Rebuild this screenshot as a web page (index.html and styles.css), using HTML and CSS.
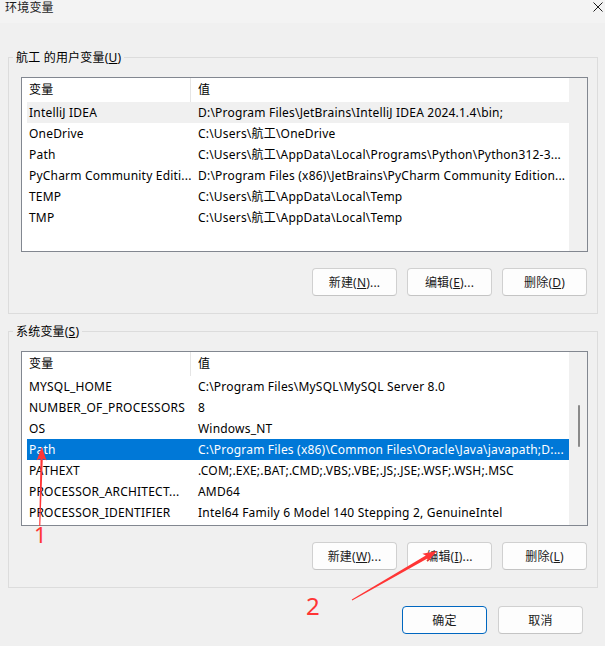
FILE: index.html
```html
<!DOCTYPE html>
<html lang="zh-CN">
<head>
<meta charset="utf-8">
<title>环境变量</title>
<link rel="stylesheet" href="styles.css">
</head>
<body>
<div class="window">
  <div class="titlebar">
    <span class="title">环境变量</span>
    <svg class="close" width="10" height="10" viewBox="0 0 10 10" aria-hidden="true">
      <path d="M0.5 0.5 L9.5 9.5 M9.5 0.5 L0.5 9.5" stroke="#1b1b1b" stroke-width="1" fill="none"/>
    </svg>
  </div>

  <fieldset class="group group-user">
    <legend>航工 的用户变量(<u>U</u>)</legend>
    <div class="list">
      <div class="list-main">
        <div class="list-head"><div class="col-name">变量</div><div class="col-value">值</div></div>
        <div class="row hover"><div class="col-name">IntelliJ IDEA</div><div class="col-value">D:\Program Files\JetBrains\IntelliJ IDEA 2024.1.4\bin;</div></div>
        <div class="row"><div class="col-name">OneDrive</div><div class="col-value">C:\Users\航工\OneDrive</div></div>
        <div class="row"><div class="col-name">Path</div><div class="col-value">C:\Users\航工\AppData\Local\Programs\Python\Python312-3...</div></div>
        <div class="row"><div class="col-name">PyCharm Community Editi...</div><div class="col-value">D:\Program Files (x86)\JetBrains\PyCharm Community Edition...</div></div>
        <div class="row"><div class="col-name">TEMP</div><div class="col-value">C:\Users\航工\AppData\Local\Temp</div></div>
        <div class="row"><div class="col-name">TMP</div><div class="col-value">C:\Users\航工\AppData\Local\Temp</div></div>
      </div>
      <div class="vscroll"></div>
    </div>
    <div class="buttons">
      <button class="btn">新建(<u>N</u>)...</button>
      <button class="btn">编辑(<u>E</u>)...</button>
      <button class="btn">删除(<u>D</u>)</button>
    </div>
  </fieldset>

  <fieldset class="group group-system">
    <legend>系统变量(<u>S</u>)</legend>
    <div class="list">
      <div class="list-main">
        <div class="list-head"><div class="col-name">变量</div><div class="col-value">值</div></div>
        <div class="row"><div class="col-name">MYSQL_HOME</div><div class="col-value">C:\Program Files\MySQL\MySQL Server 8.0</div></div>
        <div class="row"><div class="col-name">NUMBER_OF_PROCESSORS</div><div class="col-value">8</div></div>
        <div class="row"><div class="col-name">OS</div><div class="col-value">Windows_NT</div></div>
        <div class="row selected"><div class="col-name">Path</div><div class="col-value">C:\Program Files (x86)\Common Files\Oracle\Java\javapath;D:...</div></div>
        <div class="row"><div class="col-name">PATHEXT</div><div class="col-value">.COM;.EXE;.BAT;.CMD;.VBS;.VBE;.JS;.JSE;.WSF;.WSH;.MSC</div></div>
        <div class="row"><div class="col-name">PROCESSOR_ARCHITECT...</div><div class="col-value">AMD64</div></div>
        <div class="row"><div class="col-name">PROCESSOR_IDENTIFIER</div><div class="col-value">Intel64 Family 6 Model 140 Stepping 2, GenuineIntel</div></div>
      </div>
      <div class="vscroll"><div class="thumb"></div></div>
    </div>
    <div class="buttons">
      <button class="btn">新建(<u>W</u>)...</button>
      <button class="btn">编辑(<u>I</u>)...</button>
      <button class="btn">删除(<u>L</u>)</button>
    </div>
  </fieldset>

  <div class="footer">
    <button class="btn btn-default">确定</button>
    <button class="btn">取消</button>
  </div>

  <svg class="annotations" width="605" height="646" viewBox="0 0 605 646" aria-hidden="true">
    <polygon points="41.7,447 46.6,460.5 42.8,458.4 40.3,526 39.2,526 40.5,458.4 36.7,460.3" fill="#ff3535"/>
    <polygon points="437,551 427.4,562.3 427.4,558.4 352.2,600.4 351.8,599.6 425.8,555.6 422.4,553.7" fill="#ff3535"/>
  </svg>
  <span class="mark mark-1">1</span>
  <span class="mark mark-2">2</span>
</div>
</body>
</html>
```

FILE: styles.css
```css
* {
  box-sizing: border-box;
}

html, body {
  margin: 0;
  padding: 0;
}

body {
  width: 605px;
  height: 646px;
  overflow: hidden;
  background: #f0f0f0;
  font-family: "Noto Sans", "Noto Sans CJK SC", sans-serif;
  font-size: 12px;
  letter-spacing: 0.2px;
  color: #000;
}

.window {
  position: relative;
  width: 605px;
  height: 646px;
}

.titlebar {
  height: 23px;
  background: #f3f3f3;
  display: flex;
  justify-content: space-between;
  align-items: flex-start;
  padding: 0 2px 0 5px;
}

.title {
  line-height: 15px;
  color: #1b1b1b;
}

.close {
  margin-top: 2px;
  display: block;
}

.group {
  min-width: 0;
  margin: 26px 7px 0 8px;
  padding: 0 9px 17px 12px;
  border: 1px solid #dcdcdc;
}

.group-system {
  margin-top: 9px;
}

.group legend {
  margin-left: -8px;
  padding: 0 3px;
  line-height: 17px;
  color: #000;
}

.list {
  margin-top: 11px;
  display: flex;
  width: 567px;
  height: 175px;
  border: 1px solid #828790;
  background: #fff;
}

.list-main {
  width: 547px;
  padding-left: 5px;
  overflow: hidden;
}

.list-head {
  display: flex;
  height: 24px;
  line-height: 24px;
}

.list-head .col-name {
  border-right: 1px solid #e5e5e5;
}

.row {
  display: flex;
  height: 21px;
  line-height: 21px;
}

.row.hover {
  background: #f0f0f0;
}

.row.selected {
  background: #0078d7;
  color: #fff;
}

.col-name {
  width: 164px;
  flex: none;
  padding-left: 2px;
  white-space: nowrap;
  overflow: hidden;
}

.col-value {
  flex: 1;
  min-width: 0;
  padding-left: 7px;
  white-space: nowrap;
  overflow: hidden;
}

.vscroll {
  width: 18px;
  flex: none;
  background: #f0f0f0;
}

.thumb {
  width: 2px;
  height: 42px;
  margin: 53px 0 0 9px;
  background: #8a8a8a;
  border-radius: 1px;
}

.buttons {
  display: flex;
  justify-content: flex-end;
  gap: 10px;
  width: 567px;
  padding-right: 1px;
  margin-top: 16px;
}

.btn {
  width: 85px;
  height: 28px;
  padding: 0;
  margin: 0;
  display: flex;
  align-items: center;
  justify-content: center;
  font: inherit;
  letter-spacing: inherit;
  color: #1b1b1b;
  background: #fdfdfd;
  border: 1px solid #d0d0d0;
  border-bottom-color: #c4c4c4;
  border-radius: 4px;
}

.btn-default {
  border: 1px solid #0067c0;
}

.footer {
  display: flex;
  justify-content: flex-end;
  gap: 11px;
  padding: 18px 22px 0 0;
}

.annotations {
  position: absolute;
  left: 0;
  top: 0;
  pointer-events: none;
}

.mark {
  position: absolute;
  font-family: "Noto Sans", sans-serif;
  color: #ff3535;
  line-height: 1;
  letter-spacing: 0;
}

.mark-1 {
  left: 34px;
  top: 523px;
  font-size: 22px;
}

.mark-2 {
  left: 306px;
  top: 594px;
  font-size: 24px;
}
```
